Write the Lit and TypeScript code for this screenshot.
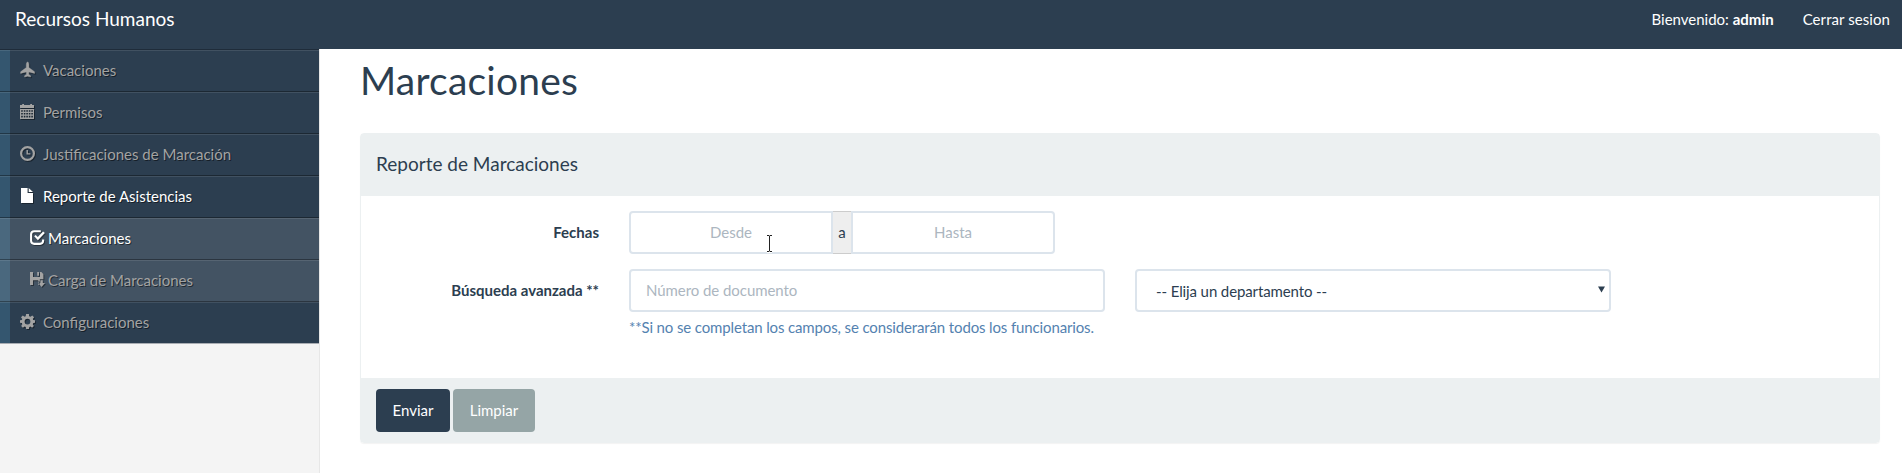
import { LitElement, html, css, svg } from "lit";
import { customElement } from "lit/decorators.js";
import { classMap } from "lit/directives/class-map.js";

const icons: Record<string, unknown> = {
  plane: svg`<path d="M7.6 0C8.5 0 8.9 1.5 8.9 2.7V5.6L14.6 9.8V11.4L8.9 9.9L8.7 12.2L10.6 13.7V15L7.6 14.2L4.6 15V13.7L6.5 12.2L6.3 9.9L.6 11.4V9.8L6.3 5.6V2.7C6.3 1.5 6.7 0 7.6 0Z" stroke="currentColor" stroke-width=".4"/>`,
  calendar: svg`<path fill-rule="evenodd" d="M2.2 0H4V1H10.2V0H12V1H14V4H0V1H2.2ZM0 5H14V15H0ZM1.2 6.3V7.8H2.8V6.3ZM3.8 6.3V7.8H5.4V6.3ZM6.3 6.3V7.8H7.9V6.3ZM8.8 6.3V7.8H10.4V6.3ZM11.3 6.3V7.8H12.9V6.3ZM1.2 9V10.6H2.8V9ZM3.8 9V10.6H5.4V9ZM6.3 9V10.6H7.9V9ZM8.8 9V10.6H10.4V9ZM11.3 9V10.6H12.9V9ZM1.2 11.8V13.4H2.8V11.8ZM3.8 11.8V13.4H5.4V11.8ZM6.3 11.8V13.4H7.9V11.8ZM8.8 11.8V13.4H10.4V11.8ZM11.3 11.8V13.4H12.9V11.8Z"/>`,
  clock: svg`<path fill-rule="evenodd" d="M7.5 0A7.5 7.5 0 1 1 7.5 15A7.5 7.5 0 1 1 7.5 0ZM7.5 2.2A5.3 5.3 0 1 0 7.5 12.8A5.3 5.3 0 1 0 7.5 2.2ZM6.5 3.9H7.9V7.3H10.4V8.6H6.5Z"/>`,
  file: svg`<path d="M1 0H7.6V5H13V15H1ZM8.7 0L13 4H8.7Z"/>`,
  check: svg`<path d="M10.8 1.3H4.2C2.3 1.3 1.1 2.5 1.1 4.3V10.8C1.1 12.7 2.3 13.9 4.2 13.9H10C11.9 13.9 13.1 12.7 13.1 10.8V9.4" fill="none" stroke="currentColor" stroke-width="2.1"/><path d="M4.2 6.3L5.7 4.9L7.8 6.9L13.1 1.4L14.9 3.1L7.9 10.2Z"/>`,
  save: svg`<path fill-rule="evenodd" d="M0 0H3V5H10V0H11.3L13.4 2V7.3H9.8V9.5H8.1L10 12V13H8.3V8.3H3V13H0ZM7.2 0H9V3.7H7.2ZM10.4 8.2H12.8V11H15L11.6 15L8.2 11H10.4Z"/>`,
  cog: svg`<path fill-rule="evenodd" d="M6.1 0H8.9L9.3 2.2L10.5 2.7L12.3 1.4L14.1 3.2L12.8 5L13.3 6.1L15 6.3V8.8L13.3 9.1L12.8 10.3L13.9 11.9L12.1 13.7L10.5 12.6L9.3 13.1L8.9 15H6.1L5.8 13.1L4.6 12.6L2.9 13.7L1.2 11.9L2.3 10.3L1.8 9.1L0 8.8V6.3L1.8 6.1L2.3 5L1 3.2L2.8 1.4L4.6 2.7L5.7 2.2ZM7.5 4.7A2.9 2.9 0 1 0 7.5 10.5A2.9 2.9 0 1 0 7.5 4.7Z"/>`,
};

const items = [
  { icon: "plane", label: "Vacaciones" },
  { icon: "calendar", label: "Permisos" },
  { icon: "clock", label: "Justificaciones de Marcación" },
  { icon: "file", label: "Reporte de Asistencias", active: true },
  { icon: "check", label: "Marcaciones", active: true, sub: true },
  { icon: "save", label: "Carga de Marcaciones", sub: true },
  { icon: "cog", label: "Configuraciones" },
];

@customElement("side-menu")
export class SideMenu extends LitElement {
  static styles = css`
    :host { display: block; }
    .menu {
      margin: 0; padding: 0; list-style: none;
      background: linear-gradient(90deg, #34566f 10px, #2c3e50 10px);
      border-top: 1px solid #1f2c3a;
    }
    .item {
      box-sizing: border-box; height: 42px;
      display: flex; align-items: center;
      padding: 0 0 1px 20px;
      border-top: 1px solid rgba(255, 255, 255, 0.1);
      border-bottom: 1px solid rgba(0, 0, 0, 0.35);
      color: #a3a3a3; text-shadow: 1px 1px 0 rgba(0, 0, 0, 0.5);
    }
    .item:last-child { border-bottom-color: #a9adb3; }
    .sub { padding-left: 30px; background: rgba(255, 255, 255, 0.11); }
    .active { color: #fff; }
    .icon {
      width: 15px; height: 15px; margin: 0 8px 2px 0; overflow: visible;
      fill: currentColor;
      filter: drop-shadow(1px 1px 0 rgba(0, 0, 0, 0.4));
    }
    .sub .icon { margin-right: 3px; }
  `;
  render() {
    return html`<ul class="menu">
      ${items.map(
        (i) => html`<li class=${classMap({ item: true, sub: !!i.sub, active: !!i.active })}>
          <svg class="icon" viewBox="0 0 15 15">${icons[i.icon]}</svg><span>${i.label}</span>
        </li>`
      )}
    </ul>`;
  }
}

@customElement("app-root")
export class AppRoot extends LitElement {
  static styles = css`
    :host {
      display: flex; flex-direction: column; height: 473px; overflow: hidden;
      font: 15px/21.43px Lato, sans-serif; color: #2c3e50; background: #fff;
    }
    *, *::before { box-sizing: border-box; }
    .navbar {
      flex: none; height: 49px; background: #2c3e50; color: #fff;
      display: flex; align-items: flex-start; padding: 9px 12px 0 15px;
    }
    .brand { font-size: 19px; flex: 1; line-height: 20px; }
    .user { margin-right: 29px; }
    .logout { letter-spacing: 0.07px; }
    .layout { flex: 1; display: flex; min-height: 0; }
    .sidebar { width: 320px; background: #f4f4f4; border-right: 1px solid #e7e7e7; }
    .main { flex: 1; padding: 0 22px 0 40px; }
    .title {
      margin: 10px 0 31px; font-size: 39px; line-height: 43px; font-weight: 400;
      letter-spacing: 0.22px;
    }
    .panel {
      border: 1px solid #ecf0f1; border-radius: 4px; height: 310px;
      display: flex; flex-direction: column; box-shadow: 0 1px 1px rgba(0, 0, 0, 0.05);
    }
    .heading {
      height: 62px; background: #ecf0f1; padding: 0 15px 3px;
      display: flex; align-items: center; font-size: 19px;
    }
    .body { flex: 1; padding-top: 15px; }
    .row { display: grid; grid-template-columns: 253px 506px 506px; margin-bottom: 15px; }
    .label { padding: 11px 15px 0; text-align: right; font-weight: 700; }
    .col { padding: 0 15px; position: relative; }
    .field {
      display: block; width: 100%; height: 43px; border: 2px solid #dce4ec; border-radius: 4px;
      background: #fff; color: #2c3e50; font: inherit; padding: 0 15px 2px; margin: 0; outline: 0;
    }
    .field::placeholder { color: #acb6c0; opacity: 1; }
    .document { letter-spacing: -0.06px; }
    .range { display: flex; width: 426px; }
    .range .field { flex: 1; min-width: 0; text-align: center; }
    .from { border-radius: 4px 0 0 4px; }
    .to { border-radius: 0 4px 4px 0; }
    .addon {
      width: 18px; background: #eee; border: solid #ccc; border-width: 1px 0;
      display: flex; align-items: center; justify-content: center;
    }
    .select { appearance: none; padding: 2px 15px 0 19px; letter-spacing: -0.11px; }
    .arrow { position: absolute; right: 21px; top: 17px; width: 7px; height: 7px; fill: #2c3e50; }
    .help { color: #5482b0; padding-top: 5px; letter-spacing: -0.133px; }
    .pointer { position: absolute; left: 152px; top: 23px; width: 7px; height: 19px; overflow: visible; }
    .footer {
      height: 64px; background: #ecf0f1; padding: 11px 15px 0; display: flex; gap: 3px;
    }
    .btn {
      height: 43px; border: 0; border-radius: 4px; color: #fff; font: inherit; padding: 0;
      background: #2c3e50; width: 74px;
    }
    .default { background: #95a5a6; width: 82px; }
  `;
  render() {
    return html`
      <header class="navbar">
        <span class="brand">Recursos Humanos</span>
        <span class="user">Bienvenido: <b>admin</b></span>
        <span class="logout">Cerrar sesion</span>
      </header>
      <div class="layout">
        <aside class="sidebar"><side-menu></side-menu></aside>
        <main class="main">
          <h1 class="title">Marcaciones</h1>
          <section class="panel">
            <div class="heading">Reporte de Marcaciones</div>
            <div class="body">
              <div class="row">
                <label class="label">Fechas</label>
                <div class="col">
                  <div class="range">
                    <input class="field from" placeholder="Desde" />
                    <span class="addon">a</span>
                    <input class="field to" placeholder="Hasta" />
                  </div>
                  <svg class="pointer" viewBox="0 0 7 19">
                    <path d="M1 1.5H3L3.5 2L4 1.5H6M3.5 2V17M1 17.5H3L3.5 17L4 17.5H6" fill="none" stroke="#fff" stroke-width="3" />
                    <path d="M1 1.5H3L3.5 2L4 1.5H6M3.5 2V17M1 17.5H3L3.5 17L4 17.5H6" fill="none" stroke="#222" />
                  </svg>
                </div>
              </div>
              <div class="row">
                <label class="label">Búsqueda avanzada **</label>
                <div class="col">
                  <input class="field document" placeholder="Número de documento" />
                  <div class="help">**Si no se completan los campos, se considerarán todos los funcionarios.</div>
                </div>
                <div class="col">
                  <select class="field select"><option>-- Elija un departamento --</option></select>
                  <svg class="arrow" viewBox="0 0 7 7"><path d="M0 .5H7L3.5 6.5Z" /></svg>
                </div>
              </div>
            </div>
            <div class="footer">
              <button class="btn">Enviar</button>
              <button class="btn default">Limpiar</button>
            </div>
          </section>
        </main>
      </div>
    `;
  }
}
